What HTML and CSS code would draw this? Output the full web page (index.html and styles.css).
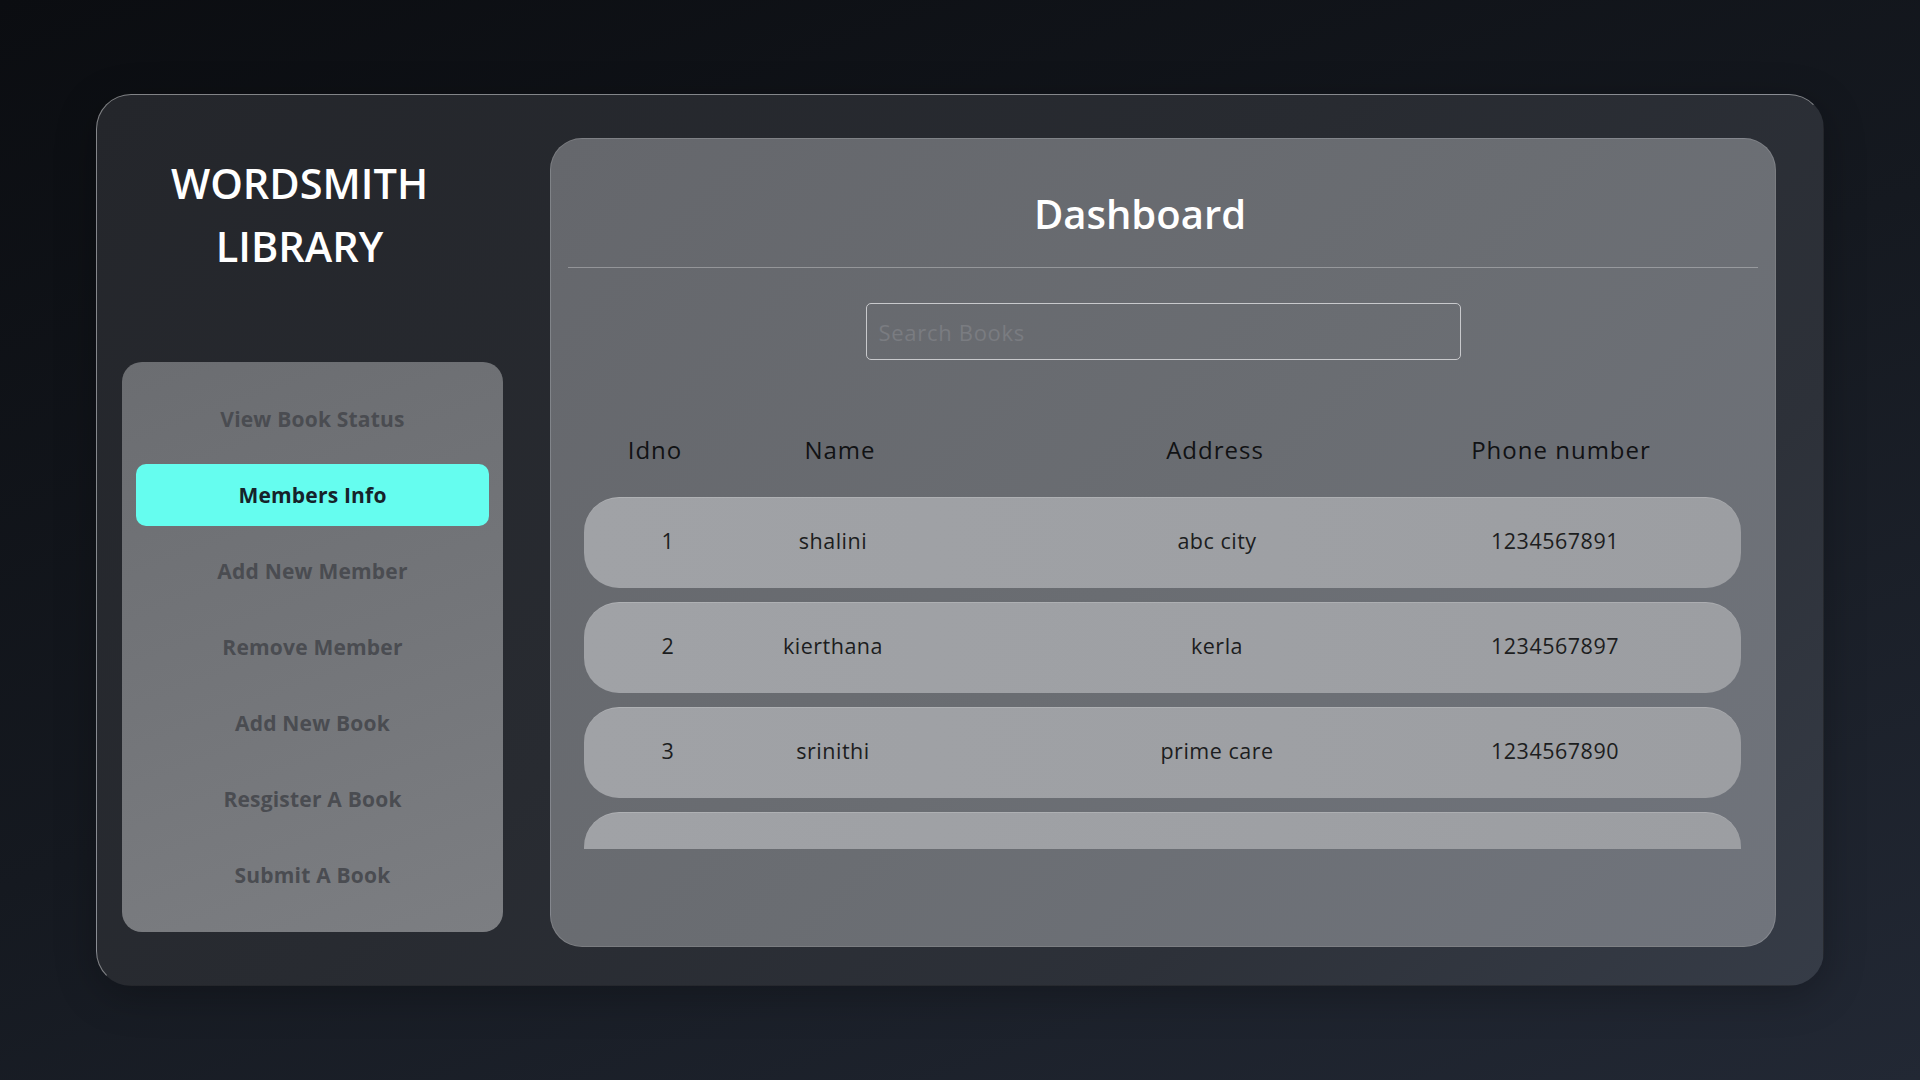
FILE: index.html
```html
<!DOCTYPE html>
<html lang="en">
<head>
<meta charset="utf-8">
<title>Wordsmith Library - Members Info</title>
<link rel="stylesheet" href="styles.css">
</head>
<body>
  <div class="app">
    <aside class="sidebar">
      <h1 class="brand">WORDSMITH<br>LIBRARY</h1>
      <nav class="menu">
        <a class="menu-item">View Book Status</a>
        <a class="menu-item active">Members Info</a>
        <a class="menu-item">Add New Member</a>
        <a class="menu-item">Remove Member</a>
        <a class="menu-item">Add New Book</a>
        <a class="menu-item">Resgister A Book</a>
        <a class="menu-item">Submit A Book</a>
      </nav>
    </aside>
    <main class="panel">
      <header class="panel-head">
        <h2 class="panel-title">Dashboard</h2>
      </header>
      <div class="search-wrap">
        <input class="search" type="text" placeholder="Search Books">
      </div>
      <div class="table-head">
        <span>Idno</span>
        <span>Name</span>
        <span>Address</span>
        <span>Phone number</span>
      </div>
      <div class="rows">
        <div class="row"><span>1</span><span>shalini</span><span>abc city</span><span>1234567891</span></div>
        <div class="row"><span>2</span><span>kierthana</span><span>kerla</span><span>1234567897</span></div>
        <div class="row"><span>3</span><span>srinithi</span><span>prime care</span><span>1234567890</span></div>
        <div class="row"><span></span><span></span><span></span><span></span></div>
      </div>
    </main>
  </div>
</body>
</html>
```
FILE: styles.css
```css
* { box-sizing: border-box; }

html, body { height: 100%; }

body {
  margin: 0;
  height: 100vh;
  display: flex;
  align-items: center;
  justify-content: center;
  background: linear-gradient(160deg, #0b0d11 0%, #151920 50%, #222834 100%);
  font-family: "Open Sans", "Noto Sans", sans-serif;
}

.app {
  width: 1728px;
  height: 892px;
  display: flex;
  gap: 47px;
  padding: 43px 47px 38px 25px;
  border-radius: 35px;
  border-top: 1px solid rgba(255, 255, 255, 0.42);
  border-left: 1px solid rgba(255, 255, 255, 0.42);
  border-right: 1px solid transparent;
  border-bottom: 1px solid transparent;
  background: linear-gradient(140deg, #24262b 0%, #282b31 45%, #2d3139 75%, #363c47 100%);
  box-shadow: 0 10px 40px rgba(0, 0, 0, 0.25);
}

/* Sidebar */
.sidebar {
  width: 381px;
  flex: none;
  display: flex;
  flex-direction: column;
}

.brand {
  margin: 14px 0 0;
  padding-right: 26px;
  color: #ffffff;
  font-family: "Open Sans", "Noto Sans", sans-serif;
  font-weight: 600;
  font-size: 41.5px;
  line-height: 63px;
  text-align: center;
}

.menu {
  margin-top: 84px;
  display: flex;
  flex-direction: column;
  gap: 14px;
  padding: 26px 14px;
  border-radius: 20px;
  background: linear-gradient(160deg, #6b6d71 0%, #737579 50%, #7c7e82 100%);
}

.menu-item {
  height: 62px;
  display: flex;
  align-items: center;
  justify-content: center;
  border-radius: 10px;
  color: #4a4c51;
  font-family: "Open Sans", "Noto Sans", sans-serif;
  font-weight: 700;
  font-size: 21px;
  letter-spacing: 0.2px;
  cursor: pointer;
}

.menu-item.active {
  background: #65fdef;
  color: #16232a;
}

/* Main panel */
.panel {
  flex: 1;
  display: flex;
  flex-direction: column;
  border-radius: 32px;
  border: 1px solid rgba(255, 255, 255, 0.14);
  background: linear-gradient(135deg, #65676c 0%, #6a6d72 50%, #70747c 100%);
  overflow: hidden;
}

.panel-head {
  margin: 0 17px;
  padding: 49px 46px 27px 0;
  border-bottom: 1px solid rgba(255, 255, 255, 0.3);
}

.panel-title {
  margin: 0;
  color: #ffffff;
  font-family: "Open Sans", "Noto Sans", sans-serif;
  font-weight: 600;
  font-size: 40px;
  line-height: 52px;
  text-align: center;
}

.search-wrap {
  display: flex;
  justify-content: center;
  margin-top: 35px;
}

.search {
  width: 595px;
  height: 57px;
  padding: 0 12px;
  border: 1.5px solid #c8c9cc;
  border-radius: 5px;
  background: transparent;
  font-family: "Open Sans", "Noto Sans", sans-serif;
  font-size: 22px;
  letter-spacing: 0.7px;
  color: #222;
  outline: none;
}

.search::placeholder {
  color: #7a7c81;
}

.table-head {
  margin: 59px 34px 0 33px;
  height: 60px;
  display: grid;
  grid-template-columns: 62px 308px 442px 250px;
  padding-left: 40px;
  align-items: center;
  justify-items: center;
  color: #111214;
  font-family: "Open Sans", "Noto Sans", sans-serif;
  font-size: 24px;
  letter-spacing: 1px;
  white-space: nowrap;
}

.rows {
  margin: 18px 34px 0 33px;
  height: 352px;
  overflow: hidden;
  display: flex;
  flex-direction: column;
  gap: 14px;
}

.row {
  flex: none;
  height: 91px;
  display: grid;
  grid-template-columns: 88px 242px 526px 150px;
  padding-left: 40px;
  padding-bottom: 5px;
  align-items: center;
  justify-items: center;
  border-radius: 35px;
  border-top: 1px solid rgba(255, 255, 255, 0.16);
  background: linear-gradient(90deg, #a0a2a6 0%, #9ea0a4 60%, #9c9ea2 100%);
  color: #1c1d20;
  font-family: "Open Sans", "Noto Sans", sans-serif;
  font-size: 21.5px;
  letter-spacing: 0.5px;
  white-space: nowrap;
}
```
